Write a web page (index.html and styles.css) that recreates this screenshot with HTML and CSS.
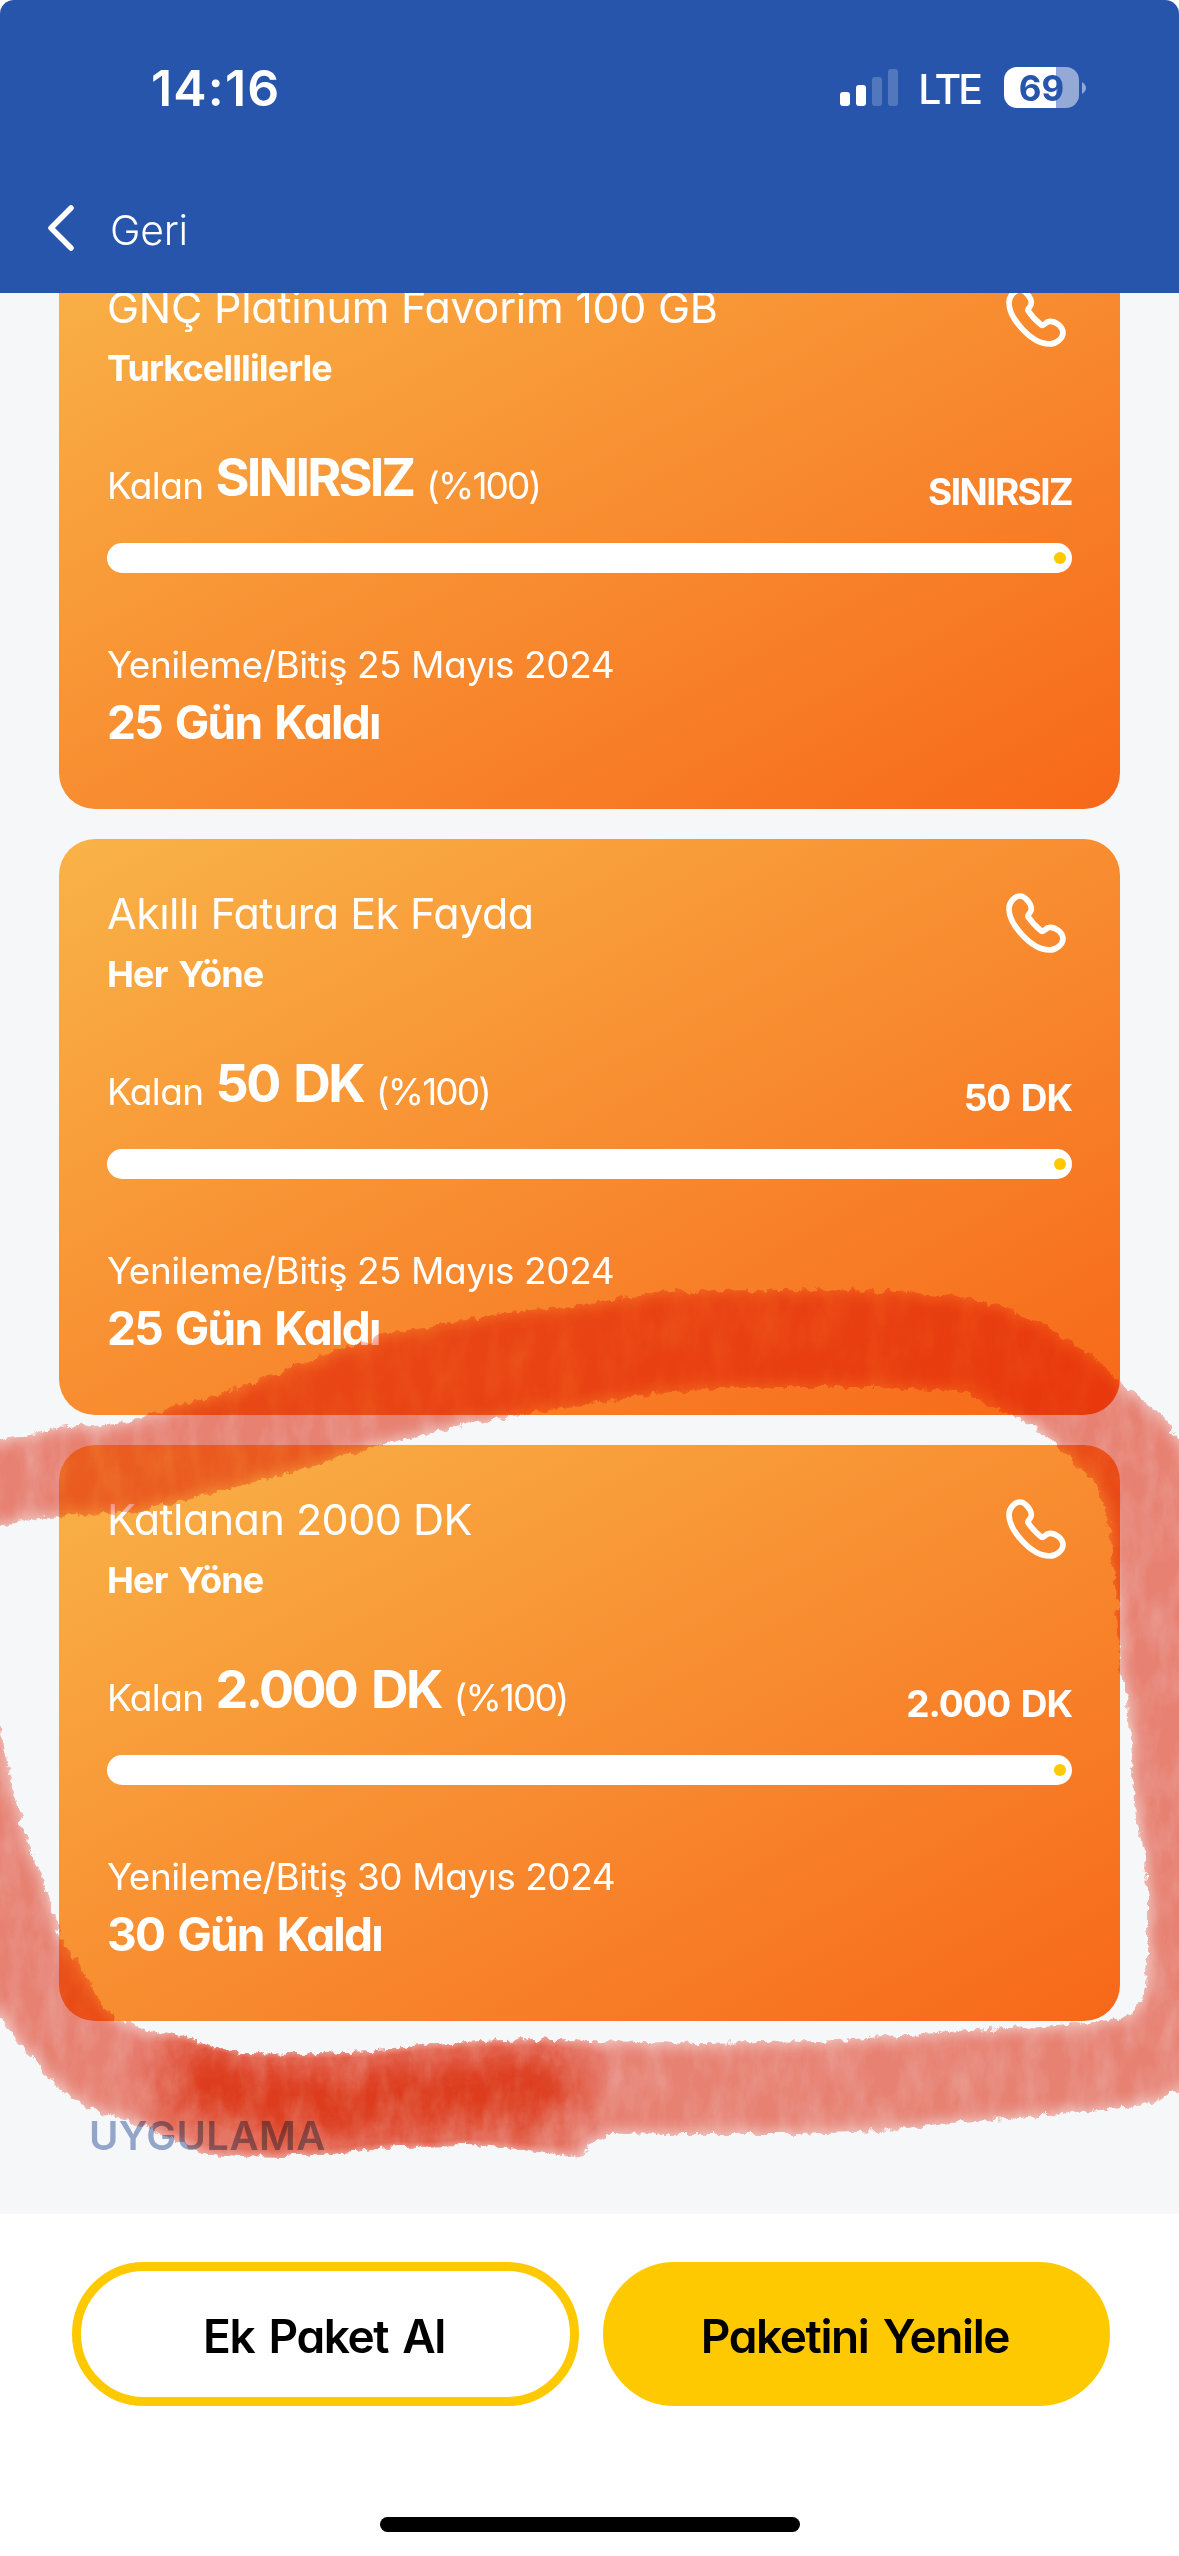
FILE: index.html
```html
<!DOCTYPE html>
<html lang="tr">
<head>
<meta charset="utf-8">
<title>Paketlerim</title>
<link rel="stylesheet" href="styles.css">
</head>
<body>
<svg class="defs" width="0" height="0" aria-hidden="true">
  <symbol id="phone" viewBox="0 0 180 180">
    <path d="M42 9C27 9 9 26 9 47C9 92 74 171 130 171C151 171 171 154 171 137C171 120 151 103 132 103C117 103 117 117 107 115Q82 95 66 71C64 61 77 62 76 46C75 31 57 9 42 9Z" fill="none" stroke="#fff" stroke-width="17" stroke-linejoin="round"/>
  </symbol>
</svg>
<div class="screen">
  <header class="header">
    <div class="status">
      <span class="time">14:16</span>
      <div class="indicators">
        <svg class="signal" width="58" height="37" viewBox="0 0 58 37" fill="#fff"><rect y="23" width="10" height="14" rx="3"/><rect x="16" y="16" width="10" height="21" rx="3"/><rect x="32" y="8" width="10" height="29" rx="3" opacity=".2"/><rect x="48" width="10" height="37" rx="3" opacity=".2"/></svg>
        <span class="network">LTE</span>
        <div class="battery">69</div>
        <svg class="tip" width="4" height="12" viewBox="0 0 4 12"><path d="M0 0Q4 3 4 6T0 12Z" fill="#94a9d5"/></svg>
      </div>
    </div>
    <div class="nav">
      <svg width="28" height="48" viewBox="0 0 28 48"><path d="M24 4L4 24L24 44" fill="none" stroke="#fff" stroke-width="5.5" stroke-linecap="round" stroke-linejoin="round"/></svg>
      <span>Geri</span>
    </div>
  </header>
  <main class="content">
    <section class="card">
      <div class="card-head">
        <div><h2>GNÇ Platinum Favorim 100 GB</h2><p class="scope tight">Turkcelllilerle</p></div>
        <svg class="phone"><use href="#phone"/></svg>
      </div>
      <div class="usage"><span class="label">Kalan</span><strong class="tight">SINIRSIZ</strong><span class="label percent">(%100)</span><b class="total tight">SINIRSIZ</b></div>
      <div class="bar"><i></i></div>
      <p class="renewal">Yenileme/Bitiş 25 Mayıs 2024</p>
      <p class="days">25 Gün Kaldı</p>
    </section>
    <section class="card">
      <div class="card-head">
        <div><h2 class="narrow">Akıllı Fatura Ek Fayda</h2><p class="scope">Her Yöne</p></div>
        <svg class="phone"><use href="#phone"/></svg>
      </div>
      <div class="usage"><span class="label">Kalan</span><strong>50 DK</strong><span class="label percent">(%100)</span><b class="total">50 DK</b></div>
      <div class="bar"><i></i></div>
      <p class="renewal">Yenileme/Bitiş 25 Mayıs 2024</p>
      <p class="days">25 Gün Kaldı</p>
    </section>
    <section class="card">
      <div class="card-head">
        <div><h2 class="narrow">Katlanan 2000 DK</h2><p class="scope">Her Yöne</p></div>
        <svg class="phone"><use href="#phone"/></svg>
      </div>
      <div class="usage"><span class="label">Kalan</span><strong>2.000 DK</strong><span class="label percent">(%100)</span><b class="total">2.000 DK</b></div>
      <div class="bar"><i></i></div>
      <p class="renewal">Yenileme/Bitiş 30 Mayıs 2024</p>
      <p class="days">30 Gün Kaldı</p>
    </section>
    <h3>UYGULAMA</h3>
  </main>
  <footer class="actions">
    <div class="buttons">
      <button class="outline">Ek Paket Al</button>
      <button class="solid">Paketini Yenile</button>
    </div>
    <div class="home"></div>
  </footer>
  <svg class="marker" width="1179" height="2556" viewBox="0 0 1179 2556">
    <defs>
      <filter id="brush" x="-50" y="1250" width="1280" height="950" filterUnits="userSpaceOnUse" color-interpolation-filters="sRGB">
        <feTurbulence type="fractalNoise" baseFrequency=".12 .1" numOctaves="4" seed="4" result="edge"/>
        <feDisplacementMap in="SourceGraphic" in2="edge" scale="11" xChannelSelector="R" yChannelSelector="G" result="rough"/>
        <feGaussianBlur in="rough" stdDeviation="9"/>
        <feColorMatrix values="0 0 0 0 1  0 0 0 0 1  0 0 0 0 1  0 0 0 1.5 .2" result="fade"/>
        <feTurbulence type="fractalNoise" baseFrequency=".045 .02" numOctaves="6" seed="9"/>
        <feColorMatrix values="0 0 0 0 1  0 0 0 0 1  0 0 0 0 1  .4 0 0 0 .75" result="grain"/>
        <feComposite in="rough" in2="grain" operator="in" result="textured"/>
        <feComposite in="textured" in2="fade" operator="in"/>
      </filter>
      <filter id="soft" x="0" y="1900" width="800" height="400" filterUnits="userSpaceOnUse"><feGaussianBlur stdDeviation="22"/></filter>
      <path id="loop" d="M-20 1444L0 1439 65 1427 130 1422 150 1414 226 1392 271 1376 331 1352 383 1335 432 1326 511 1312 571 1306 631 1297 669 1291 782 1290 895 1291 963 1297 1008 1308 1053 1330 1090 1355 1120 1381 1143 1400 1165 1420 1179 1440 1220 1480V2080L1179 2091 1150 2103 1100 2110 1020 2118 950 2123 880 2131 800 2134 680 2134 605 2135 580 2155 560 2157 510 2148 470 2146 400 2147 330 2153 285 2157 240 2156 200 2153 175 2140 140 2125 95 2110 65 2095 45 2075 33 2056 15 2040 0 2017 -40 1980V1650L0 1727 5 1750 12 1790 20 1815 28 1850 40 1870 50 1900 60 1935 72 1955 85 1975 100 2000 115 2020 150 2031 190 2038 215 2047 240 2053 300 2054 370 2051 420 2045 480 2041 530 2039 590 2041 700 2043 820 2041 900 2036 970 2030 1010 2028 1070 2024 1110 2021 1135 2012 1145 1995 1148 1960 1148 1900 1145 1860 1137 1820 1131 1760 1128 1700 1120 1665 1118 1640 1117 1600 1113 1560 1108 1520 1095 1480 1075 1465 1053 1440 1030 1425 1000 1410 963 1392 880 1387 737 1387 669 1392 586 1404 526 1414 451 1428 391 1443 331 1460 271 1478 211 1494 140 1512 60 1517 30 1520 0 1526 -20 1528Z"/>
      <clipPath id="within"><use href="#loop"/></clipPath>
    </defs>
    <g filter="url(#brush)">
      <use href="#loop" fill="#e41d00" opacity=".54"/>
      <g clip-path="url(#within)">
        <path d="M200 2080Q240 2104 330 2102T540 2090" fill="none" stroke="#e22600" stroke-width="84" stroke-linecap="round" opacity=".78" filter="url(#soft)"/>
      </g>
    </g>
  </svg>
</div>
</body>
</html>
```
FILE: styles.css
```css
*{box-sizing:border-box}
body,h2,h3,p{margin:0}
body{background:#fff;font-family:Inter,"Noto Sans",sans-serif;font-feature-settings:"cv11";color:#fff}
.defs{position:absolute}
.screen{position:relative;width:1179px;height:2556px;overflow:hidden;display:flex;flex-direction:column}
.header{height:293px;flex:none;background:#2855ac;border-radius:14px 14px 0 0;position:relative;z-index:1;display:flex;flex-direction:column}
.status{height:175px;padding:0 93px 0 151px;display:flex;justify-content:space-between;align-items:center}
.time{font-size:50px;font-weight:600;letter-spacing:1.2px}
.indicators{display:flex;align-items:center}
.network{font-size:41px;font-weight:450;letter-spacing:-3px;margin:2px 24px 0 20px}
.battery{width:75px;height:41px;border-radius:13px;background:linear-gradient(90deg,#fff 69%,#94a9d5 69%);display:flex;align-items:center;justify-content:center;color:#2855ac;font-size:35px;font-weight:700;margin-right:3px}
.nav{display:flex;align-items:center;height:106px;padding-left:47px;gap:35px;font-size:41px;font-weight:350}
.nav span{padding-top:4px;letter-spacing:-.3px}
.content{height:1981px;flex:none;background:#f6f7f9;padding:0 59px;display:flex;flex-direction:column;gap:30px;margin-top:-60px}
.card{height:576px;flex:none;border-radius:36px;padding:49px 48px 0;background:linear-gradient(to bottom right,#f9b348 0%,#f76819 100%)}
.card-head{display:flex;justify-content:space-between;height:166px}
h2{font-size:43px;line-height:50px;font-weight:380;letter-spacing:-.25px}
h2.narrow{letter-spacing:-.52px}
.scope{font-size:36px;line-height:44px;font-weight:650;margin-top:14px;letter-spacing:-.8px;word-spacing:3px}
.scope.tight{letter-spacing:-.9px}
.phone{width:60px;height:60px;margin:5px 6px 0 0}
.usage{display:flex;height:95px;line-height:60px}
.label{font-size:37px;font-weight:380;padding-top:8px;letter-spacing:-.6px}
.percent{letter-spacing:-1.9px}
.usage strong{font-size:52px;font-weight:650;letter-spacing:-2.6px;word-spacing:5px;margin:0 13px 0 12px}
.usage strong.tight{letter-spacing:-2.8px}
.total{font-size:37px;font-weight:650;letter-spacing:-1.1px;word-spacing:3px;margin-left:auto;padding-top:14px}
.total.tight{letter-spacing:-1.6px}
.bar{height:30px;border-radius:15px;background:#fff;display:flex;align-items:center;justify-content:flex-end;padding-right:6px}
.bar i{width:12px;height:12px;border-radius:50%;background:#ffc900}
.renewal{font-size:37px;line-height:44px;font-weight:380;margin-top:70px;letter-spacing:-.45px}
.days{font-size:46px;line-height:54px;font-weight:650;margin-top:8px;letter-spacing:-1.8px;word-spacing:4px}
h3{font-size:40px;line-height:50px;font-weight:600;color:#93a5c8;margin:60px 0 0 30px;letter-spacing:.4px}
.actions{flex:1;background:#fff;padding-top:48px;display:flex;flex-direction:column;align-items:center}
.buttons{display:flex;gap:24px;margin-left:3px}
button{width:507px;height:144px;border-radius:72px;border:9px solid #ffc900;background:#fff;font:600 46px Inter,sans-serif;font-feature-settings:"cv11";letter-spacing:-1.4px;word-spacing:4px;color:#000;padding:4px 3px 0 0}
.solid{background:#ffc900}
.home{width:420px;height:15px;border-radius:8px;background:#000;margin-top:111px}
.marker{position:absolute;left:0;top:0;z-index:2;pointer-events:none;mix-blend-mode:multiply}
```
